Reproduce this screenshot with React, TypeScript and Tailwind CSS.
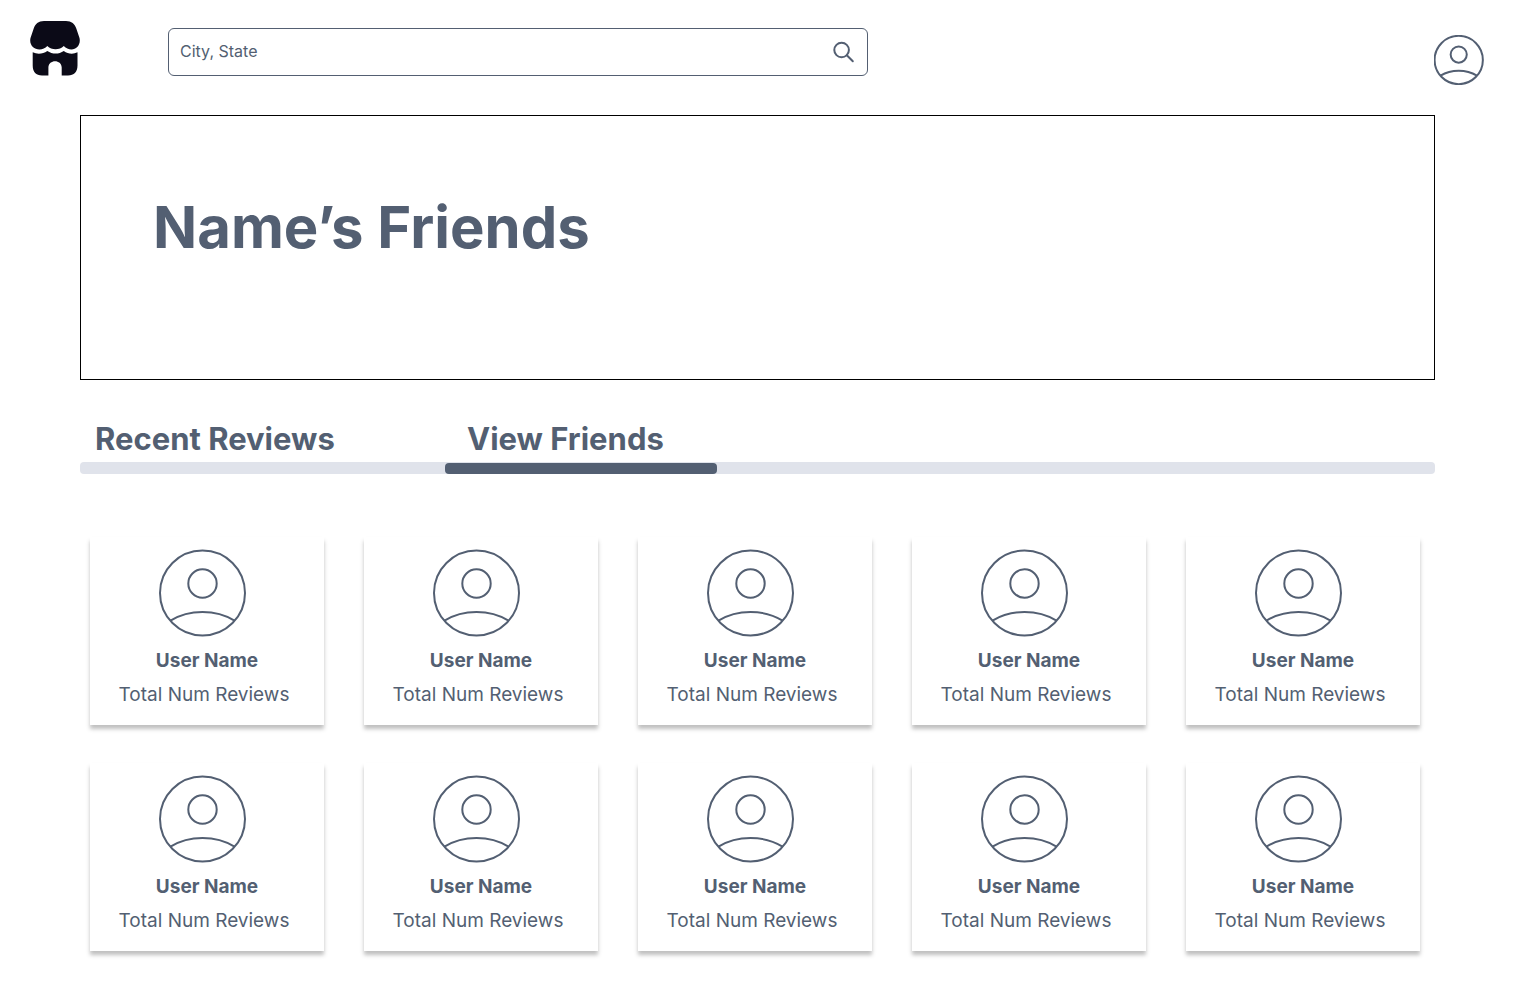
import React from "react";

function Avatar({ className }: { className: string }) {
  return (
    <svg
      viewBox="0 0 88 88"
      fill="none"
      stroke="currentColor"
      strokeWidth="2"
      className={className}
      aria-hidden="true"
    >
      <circle cx="43.500" cy="44" r="42.500" vectorEffect="non-scaling-stroke" />
      <circle cx="43.500" cy="34.500" r="14.200" vectorEffect="non-scaling-stroke" />
      <path d="M11.500 71.600C21 65.800 32 63 43.500 63C55 63 66 65.800 75.500 71.600" vectorEffect="non-scaling-stroke" />
    </svg>
  );
}

function StoreLogo() {
  return (
    <svg viewBox="0 0 50 56" className="h-14 w-[50px]" fill="#0b0a17" aria-hidden="true">
      <path d="M14 1H36C41.500 1 45 4 46.300 8.500L49.500 18C51 24.500 46.500 29.500 41.500 29.500C38.500 29.500 36 28.200 33.800 26C31.500 28.300 28.800 29.300 25.500 29.300C22.300 29.300 19.700 28.300 17.300 26C15.300 28.200 12.500 29.500 9.500 29.500C3.500 29.500 -1 24.500 .5 18L3.700 8.500C5 4 8.500 1 14 1Z" />
      <path d="M2.700 32.300C7.500 34.600 13 34 17.300 31C22.500 34.400 28.800 34.400 33.800 31C38 34 43 34.600 47.500 32.300V45.500C47.500 52 44 55.500 38 55.500H31.700V47.500C31.700 39 18.400 39 18.400 47.500V55.500H12C6 55.500 2.700 52 2.700 45.500Z" />
    </svg>
  );
}

function SearchIcon() {
  return (
    <svg
      viewBox="0 0 22 22"
      className="size-[22px]"
      fill="none"
      stroke="currentColor"
      strokeWidth="2"
      strokeLinecap="round"
      aria-hidden="true"
    >
      <circle cx="8.600" cy="9" r="7.300" />
      <path d="M13.800 14.200L19.800 20.200" />
    </svg>
  );
}

const friends = Array.from({ length: 10 }, (_, id) => ({
  id,
  name: "User Name",
  reviews: "Total Num Reviews",
}));

export default function App() {
  return (
    <div className="bg-white pb-8 font-['Inter',sans-serif] text-[#535f72]">
      <header className="flex items-start pt-5 pr-[29px] pl-[30px]">
        <a href="#home" aria-label="Home" className="shrink-0">
          <StoreLogo />
        </a>
        <form
          role="search"
          onSubmit={(e) => e.preventDefault()}
          className="mt-2 mr-8 ml-[88px] flex h-12 max-w-[700px] flex-1 items-center rounded-md border border-[#535f72] pr-3 pl-[11px]"
        >
          <input
            type="text"
            aria-label="City, State"
            placeholder="City, State"
            className="min-w-0 flex-1 bg-transparent pb-0.5 text-base outline-none placeholder:text-[#535f72]"
          />
          <button type="submit" aria-label="Search">
            <SearchIcon />
          </button>
        </form>
        <button type="button" aria-label="Account" className="mt-[15px] ml-auto shrink-0">
          <Avatar className="size-[50px]" />
        </button>
      </header>

      <main className="mt-[30px] mr-[78px] ml-20">
        <section className="border border-black px-[72px] pt-[75px] pb-[116px]">
          <h1 className="text-[58px] leading-[72px] font-bold">Name’s Friends</h1>
        </section>

        <nav className="mt-10" aria-label="Profile">
          <div className="flex h-[42px] items-start">
            <a href="#reviews" className="w-[365px] pl-[15px] text-[31px] leading-[38px] font-bold">
              Recent Reviews
            </a>
            <a
              href="#friends"
              aria-current="page"
              className="w-[272px] pl-[22px] text-[31px] leading-[38px] font-bold"
            >
              View Friends
            </a>
          </div>
          <div className="flex h-3 items-end rounded bg-[#e0e3eb] pl-[365px]">
            <div className="h-[11px] w-[272px] rounded bg-[#535f72]" />
          </div>
        </nav>

        <ul className="mt-[63px] mr-[15px] ml-2.5 grid grid-cols-5 gap-x-10 gap-y-[38px]">
          {friends.map((friend) => (
            <li
              key={friend.id}
              className="flex flex-col items-center bg-white pt-3 pb-[18px] shadow-[0_4px_4px_rgba(0,0,0,0.25)]"
            >
              <Avatar className="mr-2 size-[88px]" />
              <h2 className="mt-3 text-[19px] leading-6 font-bold">{friend.name}</h2>
              <p className="mt-2.5 mr-1.5 text-[19px] leading-6">{friend.reviews}</p>
            </li>
          ))}
        </ul>
      </main>
    </div>
  );
}
